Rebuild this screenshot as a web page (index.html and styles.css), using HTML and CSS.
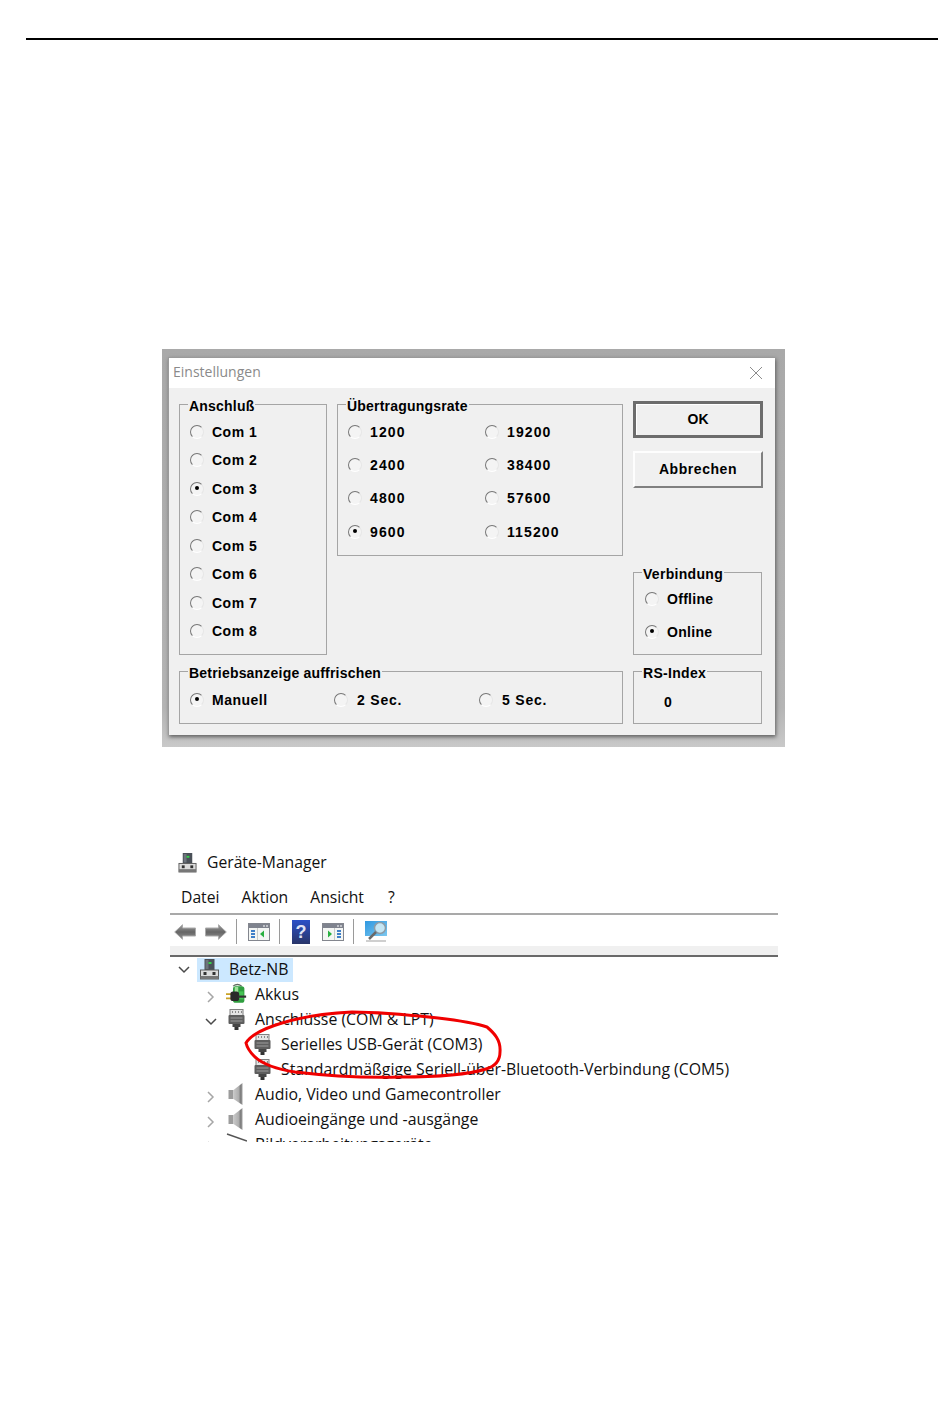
FILE: index.html
```html
<!DOCTYPE html>
<html lang="de">
<head>
<meta charset="utf-8">
<title>Einstellungen</title>
<link rel="stylesheet" href="styles.css">
</head>
<body>
<svg class="defs" width="0" height="0" aria-hidden="true">
  <defs>
    <linearGradient id="cone" x1="0" x2="1" y1="0" y2="0"><stop offset="0" stop-color="#c8c8c8"/><stop offset=".55" stop-color="#b0b0b0"/><stop offset=".8" stop-color="#7c7c7c"/><stop offset="1" stop-color="#a0a0a0"/></linearGradient>
    <linearGradient id="arrowfill" x1="0" x2="0" y1="0" y2="1"><stop offset="0" stop-color="#a0a0a0"/><stop offset=".5" stop-color="#666"/><stop offset="1" stop-color="#909090"/></linearGradient>
    <linearGradient id="helpfill" x1="0" x2="0" y1="0" y2="1"><stop offset="0" stop-color="#2a50c8"/><stop offset="1" stop-color="#283468"/></linearGradient>
    <linearGradient id="screen" x1="0" x2="1" y1="0" y2="1"><stop offset="0" stop-color="#2f98e0"/><stop offset="1" stop-color="#7cc8f0"/></linearGradient>
  </defs>
  <symbol id="computer" viewBox="0 0 20 22">
    <rect x="5" y="1" width="10" height="11" fill="#4a5058"/>
    <rect x="6" y="2" width="3" height="9" fill="#6d747c"/>
    <rect x="9" y="4" width="3" height="2" fill="#35d04a"/>
    <rect x="1" y="12" width="18" height="9" fill="#dcdcdc" stroke="#5c5c5c"/>
    <rect x="1" y="18" width="18" height="3" fill="#777"/>
    <rect x="4" y="14" width="3" height="3" fill="#333"/>
    <rect x="13" y="14" width="3" height="3" fill="#333"/>
  </symbol>
  <symbol id="port" viewBox="0 0 18 22">
    <rect x="2.5" y="1.5" width="13" height="6" fill="#e4e4e4" stroke="#808080"/>
    <path d="M5 3v2M8 3v2M11 3v2M14 3v2" stroke="#8a8a8a"/>
    <rect x="1" y="7" width="16" height="9" rx="1" fill="#5e5e5e"/>
    <path d="M3 10h12M3 13h12" stroke="#9c9c9c"/>
    <rect x="5" y="16" width="8" height="3" fill="#454545"/>
    <rect x="7" y="19" width="4" height="3" fill="#333"/>
  </symbol>
  <symbol id="speaker" viewBox="0 0 18 22">
    <path d="M1 7h5v9H1z" fill="#9c9c9c"/>
    <path d="M6 7l9-7v22l-9-6z" fill="url(#cone)"/>
  </symbol>
  <symbol id="imaging" viewBox="0 0 21 22">
    <path d="M1 1l20 7" stroke="#555" stroke-width="1.5" fill="none"/>
  </symbol>
  <symbol id="battery" viewBox="0 0 24 24">
    <path d="M8 3q5-4 10 0" fill="#dfeedd" stroke="#5f6a5f" stroke-width="1.2"/>
    <rect x="8" y="3" width="13" height="19" rx="3" fill="#2f9e3f"/>
    <rect x="10" y="4" width="4" height="11" fill="#9ee09a"/>
    <rect x="15" y="9" width="5" height="9" fill="#45c455"/>
    <path d="M0 12h6M0 17h6" stroke="#c9a227" stroke-width="2"/>
    <rect x="5" y="9" width="10" height="11" rx="3" fill="#2a2a2a"/>
    <path d="M14 15h9" stroke="#333" stroke-width="2.5"/>
  </symbol>
  <symbol id="pane" viewBox="0 0 22 18">
    <rect x=".5" y=".5" width="21" height="17" fill="#f4f6f4" stroke="#83868e"/>
    <rect x="1" y="1" width="20" height="4" fill="#7f838e"/>
    <path d="M15 3h2M18 3h2" stroke="#fff"/>
  </symbol>
</svg>

<div class="rule"></div>

<section class="capture">
  <div class="window">
    <header class="titlebar">
      <span class="title">Einstellungen</span>
      <svg class="close" width="14" height="14" viewBox="0 0 14 14"><path d="M1 1l12 12M13 1L1 13" stroke="#8c8c8c" fill="none"/></svg>
    </header>
    <div class="panel">
      <div class="col-left">
        <div class="row-top">
          <div class="group ports">
            <span class="legend">Anschluß</span>
            <div class="opt"><i class="radio"></i><span>Com 1</span></div>
            <div class="opt"><i class="radio"></i><span>Com 2</span></div>
            <div class="opt"><i class="radio on"></i><span>Com 3</span></div>
            <div class="opt"><i class="radio"></i><span>Com 4</span></div>
            <div class="opt"><i class="radio"></i><span>Com 5</span></div>
            <div class="opt"><i class="radio"></i><span>Com 6</span></div>
            <div class="opt"><i class="radio"></i><span>Com 7</span></div>
            <div class="opt"><i class="radio"></i><span>Com 8</span></div>
          </div>
          <div class="group rates">
            <span class="legend">Übertragungsrate</span>
            <div class="opt"><i class="radio"></i><span>1200</span></div>
            <div class="opt"><i class="radio"></i><span>19200</span></div>
            <div class="opt"><i class="radio"></i><span>2400</span></div>
            <div class="opt"><i class="radio"></i><span>38400</span></div>
            <div class="opt"><i class="radio"></i><span>4800</span></div>
            <div class="opt"><i class="radio"></i><span>57600</span></div>
            <div class="opt"><i class="radio on"></i><span>9600</span></div>
            <div class="opt"><i class="radio"></i><span>115200</span></div>
          </div>
        </div>
        <div class="group refresh">
          <span class="legend">Betriebsanzeige auffrischen</span>
          <div class="opt"><i class="radio on"></i><span>Manuell</span></div>
          <div class="opt"><i class="radio"></i><span>2 Sec.</span></div>
          <div class="opt"><i class="radio"></i><span>5 Sec.</span></div>
        </div>
      </div>
      <div class="col-right">
        <button class="btn default" type="button">OK</button>
        <button class="btn" type="button">Abbrechen</button>
        <div class="group link">
          <span class="legend">Verbindung</span>
          <div class="opt"><i class="radio"></i><span>Offline</span></div>
          <div class="opt"><i class="radio on"></i><span>Online</span></div>
        </div>
        <div class="group index">
          <span class="legend">RS-Index</span>
          <span class="value">0</span>
        </div>
      </div>
    </div>
  </div>
</section>

<section class="devmgr">
  <div class="dm-title">
    <svg class="ico-title"><use href="#computer"/></svg>
    <span>Geräte-Manager</span>
  </div>
  <nav class="menu">
    <span>Datei</span><span>Aktion</span><span>Ansicht</span><span>?</span>
  </nav>
  <div class="toolbar">
    <svg class="arrow" viewBox="0 0 22 16"><path d="M.7 8L8.500.7V4H21.500v8H8.500v3.300z" fill="url(#arrowfill)" stroke="#ababab"/></svg>
    <svg class="arrow next" viewBox="0 0 22 16"><path d="M21.300 8L13.500.7V4H.5v8h13v3.300z" fill="url(#arrowfill)" stroke="#ababab"/></svg>
    <i class="sep first"></i>
    <svg class="pane-ico"><use href="#pane"/><path d="M3 8h4M3 11h4M3 14h4" stroke="#3f7fc8" stroke-width="2"/><path d="M9.500 5v12" stroke="#c8cac8"/><path d="M16 7.500l-4 3.500 4 3.500z" fill="#28b040"/></svg>
    <i class="sep"></i>
    <svg class="help" viewBox="0 0 18 24"><rect width="18" height="24" fill="url(#helpfill)"/><text x="9" y="18" class="help-q">?</text></svg>
    <svg class="pane-ico"><use href="#pane"/><path d="M15 8h4M15 11h4M15 14h4" stroke="#3f7fc8" stroke-width="2"/><path d="M12.500 5v12" stroke="#c8cac8"/><path d="M6 7.500l4 3.500-4 3.500z" fill="#28b040"/></svg>
    <i class="sep"></i>
    <svg class="scan" viewBox="0 0 24 22"><rect width="22" height="15" fill="url(#screen)"/><circle cx="15" cy="7" r="5.500" fill="#c4e6f4" stroke="#8c9ca8" stroke-width="1.500"/><path d="M11 11l-7 7" stroke="#6a6a6a" stroke-width="2.500"/><path d="M1 20h20" stroke="#cfcfcf" stroke-width="2"/></svg>
  </div>
  <div class="band"></div>
  <div class="tree">
    <div class="node l0">
      <svg class="chev open" viewBox="0 0 12 12"><path d="M1 3l5 5 5-5" fill="none" stroke="#4a4a4a" stroke-width="1.5"/></svg>
      <span class="sel"><svg class="ico"><use href="#computer"/></svg><span class="lbl">Betz-NB</span></span>
    </div>
    <div class="node l1">
      <svg class="chev" viewBox="0 0 12 12"><path d="M3 1l5 5-5 5" fill="none" stroke="#a6a6a6" stroke-width="1.5"/></svg>
      <svg class="ico"><use href="#battery"/></svg><span class="lbl">Akkus</span>
    </div>
    <div class="node l1">
      <svg class="chev" viewBox="0 0 12 12"><path d="M1 3l5 5 5-5" fill="none" stroke="#4a4a4a" stroke-width="1.5"/></svg>
      <svg class="ico"><use href="#port"/></svg><span class="lbl">Anschlüsse (COM &amp; LPT)</span>
    </div>
    <div class="node l2">
      <i class="chev"></i>
      <svg class="ico"><use href="#port"/></svg><span class="lbl">Serielles USB-Gerät (COM3)</span>
    </div>
    <div class="node l2">
      <i class="chev"></i>
      <svg class="ico"><use href="#port"/></svg><span class="lbl">Standardmäßgige Seriell-über-Bluetooth-Verbindung (COM5)</span>
    </div>
    <div class="node l1">
      <svg class="chev" viewBox="0 0 12 12"><path d="M3 1l5 5-5 5" fill="none" stroke="#a6a6a6" stroke-width="1.5"/></svg>
      <svg class="ico"><use href="#speaker"/></svg><span class="lbl">Audio, Video und Gamecontroller</span>
    </div>
    <div class="node l1">
      <svg class="chev" viewBox="0 0 12 12"><path d="M3 1l5 5-5 5" fill="none" stroke="#a6a6a6" stroke-width="1.5"/></svg>
      <svg class="ico"><use href="#speaker"/></svg><span class="lbl">Audioeingänge und -ausgänge</span>
    </div>
    <div class="node l1">
      <svg class="chev" viewBox="0 0 12 12"><path d="M3 1l5 5-5 5" fill="none" stroke="#a6a6a6" stroke-width="1.5"/></svg>
      <svg class="ico"><use href="#imaging"/></svg><span class="lbl">Bildverarbeitungsgeräte</span>
    </div>
  </div>
  <svg class="scribble" width="270" height="80" viewBox="240 1005 270 80"><path d="M246 1043C250 1036 262 1029 282 1023C302 1017 330 1013 352 1012C380 1012 410 1015 438 1018C455 1020 472 1022 487 1027C494 1033 501 1040 500 1052C500 1060 496 1066 486 1069C470 1074 440 1077 400 1077C360 1078 320 1075 295 1072C275 1069 262 1064 254 1056C250 1052 247 1047 246 1043Z" fill="none" stroke="#f00000" stroke-width="3"/></svg>
</section>
</body>
</html>
```

FILE: styles.css
```css
* { box-sizing: border-box; }
html, body { margin: 0; padding: 0; background: #fff; }
body { width: 950px; height: 1425px; overflow: hidden; font-family: "Liberation Sans", Arial, sans-serif; color: #000; }
.defs { position: absolute; }

.rule { height: 2px; margin: 38px 12px 0 26px; background: #000; }

.capture { width: 623px; height: 398px; margin: 309px 0 0 162px; padding: 8px 0 0 6px; background: linear-gradient(#a9a9a9, #b5b5b5 90%, #c9c9c9); }
.window { width: 607px; height: 378px; background: #f0f0f0; box-shadow: 1px 2px 4px #5f5f5f; border: 1px solid #9a9a9a; border-bottom: 0; border-right: 0; }
.titlebar { height: 30px; background: #fff; display: flex; align-items: center; justify-content: space-between; padding: 0 12px 4px 4px; }
.title { font: 14px "Open Sans", sans-serif; color: #8a8a8a; }
.close { display: block; margin-top: 4px; }

.panel { display: flex; gap: 10px; padding: 16px 0 0 10px; }
.col-left { width: 444px; display: flex; flex-direction: column; gap: 16px; }
.row-top { display: flex; gap: 10px; align-items: flex-start; }
.col-right { width: 130px; display: flex; flex-direction: column; }

.group { position: relative; border: 1px solid #a5a5a5; font-size: 14px; font-weight: 700; letter-spacing: .5px; }
.legend { position: absolute; top: -7px; left: 8px; padding: 0 1px; background: #f0f0f0; line-height: 16px; font-weight: 700; white-space: nowrap; font-size: 14px; letter-spacing: .2px; }
.refresh .legend { left: 8px; }
.link .legend, .index .legend { letter-spacing: .3px; }

.opt { display: flex; align-items: center; gap: 8px; white-space: nowrap; }
.radio { display: block; flex: none; width: 14px; height: 14px; border-radius: 50%; border: 1.5px solid; border-color: #777 #e6e6e6 #fff #777; background: #f4f4f4; position: relative; }
.radio.on::after { content: ""; position: absolute; left: 3.5px; top: 3.5px; width: 4px; height: 4px; border-radius: 50%; background: #000; }

.ports { width: 148px; height: 251px; padding: 12.25px 0 0 10px; display: grid; grid-auto-rows: 28.5px; }
.rates { width: 286px; height: 152px; padding: 10px 0 0 10px; display: grid; grid-template-columns: 137px 137px; grid-auto-rows: 33.33px; letter-spacing: 1.1px; }
.refresh { width: 444px; height: 53px; padding: 14px 0 0 10px; display: grid; grid-template-columns: 144px 145px 145px; grid-auto-rows: 27px; }
.refresh .opt + .opt { gap: 9px; letter-spacing: .8px; }

.btn { display: block; width: 130px; height: 37px; background: #f0f0f0; border: 2px solid; border-color: #fdfdfd #808080 #808080 #fdfdfd; font: 700 14px "Liberation Sans", sans-serif; letter-spacing: .55px; color: #000; padding: 0 0 2px; margin: 0; }
.btn.default { margin-top: -3px; margin-bottom: 13px; border: 3px solid; border-color: #6c6c6c; font-weight: 700; letter-spacing: 0; box-shadow: inset 1px 1px 0 #fff; }

.link { width: 129px; height: 83px; margin-top: 84px; padding: 9px 0 0 11px; display: grid; grid-auto-rows: 33.3px; letter-spacing: .3px; }
.index { width: 129px; height: 53px; margin-top: 16px; padding: 21px 0 0 30px; }
.value { display: block; line-height: 18px; }

.devmgr { position: relative; width: 608px; margin: 103px 0 0 170px; font: 15.7px "Open Sans", sans-serif; color: #111; }
.dm-title { height: 24px; display: flex; align-items: center; gap: 10px; padding-left: 8px; }
.ico-title { width: 19px; height: 21px; display: block; }
.menu { height: 39px; display: flex; gap: 22px; padding: 12px 0 0 11px; line-height: 22px; }
.menu span:last-child { margin-left: 2px; }
.toolbar { height: 33px; border-top: 2px solid #a9a9a9; display: flex; align-items: center; padding: 2px 0 0 4px; }
.arrow { width: 22px; height: 16px; display: block; }
.arrow.next { margin-left: 9px; }
.sep { display: block; width: 1px; height: 25px; background: #9a9a9a; margin: 0 12px 0 9px; flex: none; }
.sep.first { margin-left: 9px; margin-right: 11px; }
.pane-ico { width: 22px; height: 18px; display: block; }
.help { width: 18px; height: 24px; display: block; margin-right: 12px; }
.help-q { font: 700 18px "Liberation Sans", sans-serif; fill: #dfe2f5; text-anchor: middle; }
.scan { width: 24px; height: 22px; display: block; margin-left: -1px; }
.band { height: 11px; background: #f0f0f0; border-bottom: 2px solid #696969; }

.tree { height: 185px; overflow: hidden; font-size: 15.85px; }
.node { height: 25px; display: flex; align-items: center; white-space: nowrap; }
.node.l0 { padding-left: 8px; }
.node.l1 { padding-left: 35px; }
.node.l2 { padding-left: 61px; }
.chev { display: block; width: 12px; height: 12px; flex: none; margin: 4px 9px 0 0; }
.chev.open { margin-top: 1px; }
.ico { display: block; width: 21px; height: 22px; flex: none; margin: 0 8px 2px 0; }
.lbl { margin-bottom: 2px; }
.sel { display: flex; align-items: center; height: 24px; margin-left: -2px; padding: 0 5px 0 2px; background: #cce8ff; }
.sel .ico { margin-right: 9px; }
.scribble { position: absolute; left: 70px; top: 155px; pointer-events: none; }
```
